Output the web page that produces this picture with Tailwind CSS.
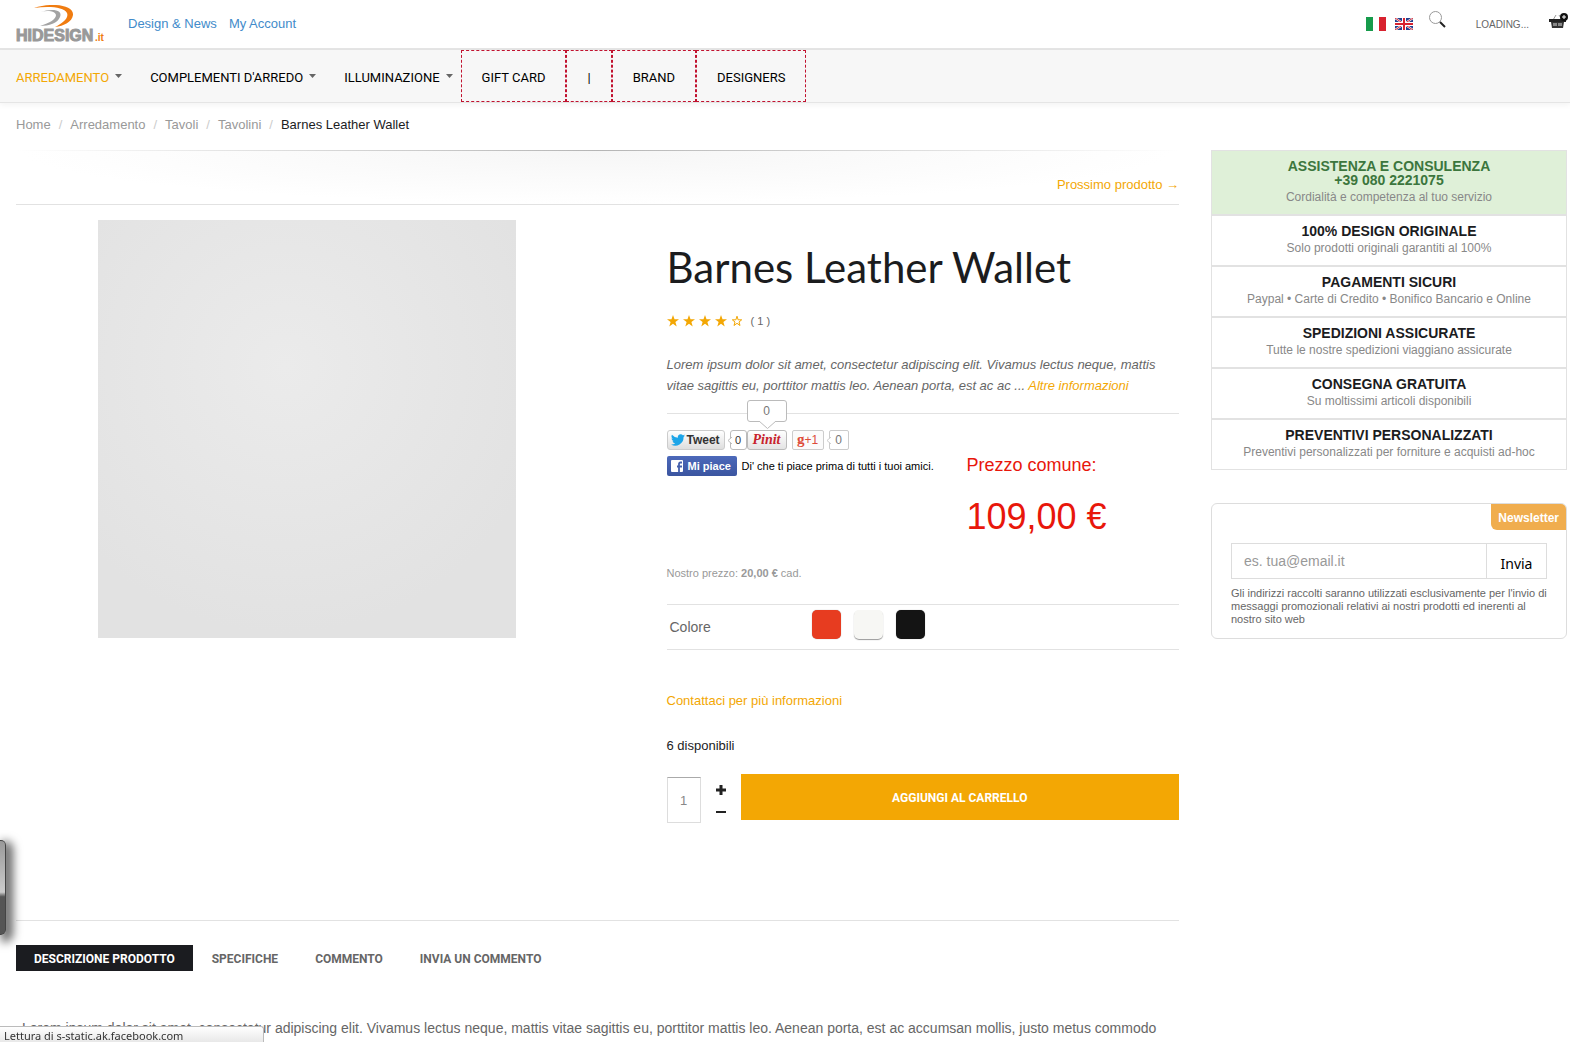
<!DOCTYPE html>
<html lang="it">
<head>
  <meta charset="UTF-8" />
  <meta name="viewport" content="width=device-width, initial-scale=1.0"/>
  <title>Barnes Leather Wallet - Hidesign.it</title>
  <script src="https://cdn.jsdelivr.net/npm/@tailwindcss/browser@4"></script>
</head>
<body class="relative min-h-screen bg-white font-['Liberation_Sans',Arial,sans-serif] text-[13px] text-[#666]">

  <!-- Top bar -->
  <header class="flex h-[50px] items-center border-b-2 border-[#e5e5e5] pl-4 pr-px">
    <a href="#" aria-label="Hidesign.it">
      <svg width="90" height="38" viewBox="0 0 90 38">
        <path d="M24 7 C37 3 47 5 44 12 C42 18 33 21 24 21 C34 18 40 14 40 10 C39 6 32 5 24 7Z" fill="#a3a3a3"/>
        <path d="M18 3 C36 -3 58 0 57 10 C56 17 48 21 39 22 C47 18 53 13 51 8 C48 2 33 1 18 3Z" fill="#f07c10"/>
        <text x="0" y="36" font-family="Liberation Sans" font-weight="bold" font-size="16" fill="#999" stroke="#999">HIDESIGN</text>
        <text x="79" y="36" font-family="Liberation Sans" font-weight="bold" font-size="10" fill="#f07c10">.it</text>
      </svg>
    </a>
    <nav class="ml-[22px] flex gap-3 text-[#428bca]">
      <a href="#">Design &amp; News</a>
      <a href="#">My Account</a>
    </nav>
    <div class="ml-auto flex items-center">
      <a href="#" aria-label="Italiano">
        <svg width="20" height="14" viewBox="0 0 20 14"><path fill="#fff" d="M0 0h20v14H0z"/><path fill="#169b4b" d="M0 0h7v14H0z"/><path fill="#d8222f" d="M13 0h7v14h-7z"/></svg>
      </a>
      <a href="#" aria-label="English" class="ml-[9px]">
        <svg width="18" height="12" viewBox="0 0 18 12">
          <path fill="#24408e" d="M0 0h18v12H0z"/>
          <path d="M0 0l18 12M18 0L0 12" stroke="#fff" stroke-width="2"/>
          <path d="M0 0l18 12M18 0L0 12" stroke="#d8222f"/>
          <path d="M9 0v12M0 6h18" stroke="#fff" stroke-width="4"/>
          <path d="M9 0v12M0 6h18" stroke="#d8222f" stroke-width="2"/>
        </svg>
      </a>
      <button type="button" aria-label="Cerca" class="mb-[10px] ml-4">
        <svg width="17" height="17" viewBox="0 0 17 17" fill="none"><circle cx="6.5" cy="6.500" r="6" stroke="#999"/><path d="M11 11l5 5" stroke="#222" stroke-width="2"/></svg>
      </button>
      <span class="ml-[30px] text-[10px]">LOADING...</span>
      <a href="#" aria-label="Carrello" class="mb-[6px] ml-5">
        <svg width="20" height="16" viewBox="0 0 20 16">
          <path d="M4 7 L7 2 M13 7 L10 2" stroke="#999" stroke-width="1" fill="none"/>
          <path d="M0 6h17v3H0z" fill="#222"/>
          <path d="M2 9h13l-1 6H3z" fill="#333"/>
          <path d="M4 10h9v3H4z" fill="#888"/>
          <path d="M8 9h1v5H8z" fill="#333"/>
          <circle cx="15" cy="4" r="4" fill="#111"/>
          <path d="M15 2v4M13 4h4" stroke="#fff"/>
        </svg>
      </a>
    </div>
  </header>

  <!-- Main menu -->
  <nav class="flex h-[53px] items-stretch border-b border-[#e5e5e5] bg-[#f7f7f7] pl-4 font-[Roboto,sans-serif] text-[13px] text-black shadow-[0_2px_6px_rgba(0,0,0,0.05)]">
    <a href="#" class="flex items-center pr-2 pt-[3px] text-[#f3a704]">ARREDAMENTO
      <svg class="mb-1 ml-[6px]" width="7" height="4" viewBox="0 0 7 4"><path d="M0 0h7L3.500 4z" fill="#666"/></svg>
    </a>
    <a href="#" class="flex items-center pl-5 pr-2 pt-[3px]">COMPLEMENTI D'ARREDO
      <svg class="mb-1 ml-[6px]" width="7" height="4" viewBox="0 0 7 4"><path d="M0 0h7L3.500 4z" fill="#666"/></svg>
    </a>
    <a href="#" class="flex items-center pl-5 pr-2 pt-[3px]">ILLUMINAZIONE
      <svg class="mb-1 ml-[6px]" width="7" height="4" viewBox="0 0 7 4"><path d="M0 0h7L3.500 4z" fill="#666"/></svg>
    </a>
    <a href="#" class="flex items-center border border-dashed border-[#c1122f] px-5 pt-[3px]">GIFT CARD</a>
    <a href="#" class="flex items-center border border-dashed border-[#c1122f] px-5 pt-[3px]">|</a>
    <a href="#" class="flex items-center border border-dashed border-[#c1122f] px-5 pt-[3px]">BRAND</a>
    <a href="#" class="flex items-center border border-dashed border-[#c1122f] px-5 pt-[3px]">DESIGNERS</a>
  </nav>

  <!-- Breadcrumb -->
  <nav class="flex h-[47px] gap-2 pl-4 pt-3 leading-5 text-[#999]">
    <a href="#">Home</a><span class="text-[#ccc]">/</span>
    <a href="#">Arredamento</a><span class="text-[#ccc]">/</span>
    <a href="#">Tavoli</a><span class="text-[#ccc]">/</span>
    <a href="#">Tavolini</a><span class="text-[#ccc]">/</span>
    <span class="text-[#1b1c1e]">Barnes Leather Wallet</span>
  </nav>

  <div class="flex gap-8 pl-4 pr-[3px]">

    <main class="min-w-0 flex-1">
      <div class="border-b border-[#e2e2e2]">
        <div class="h-px bg-linear-to-r from-transparent via-[#b5b5b5] to-transparent"></div>
        <div class="flex h-[53px] items-end justify-end bg-[radial-gradient(ellipse_at_top,#f6f6f6,#fff_70%)] pb-[9px] leading-5">
          <a href="#" class="text-[#f3a704]">Prossimo prodotto →</a>
        </div>
      </div>

      <section class="flex border-b border-[#e2e2e2] pb-[97px] pt-[15px]">
        <div class="w-1/2">
          <div class="mx-auto size-[418px] bg-[radial-gradient(circle_at_45%_35%,#ebebeb,#e2e2e2_75%)]"></div>
        </div>

        <div class="w-1/2 pl-[69px]">
          <h1 class="pt-[19px] font-[Lato,sans-serif] text-[42px] leading-14 text-[#1b1c1e]">Barnes Leather Wallet</h1>

          <div class="mt-4 flex h-5 items-center gap-1">
            <svg width="12" height="12" viewBox="0 0 12 12"><path d="M6 0l1.500 4.300H12L8.400 7l1.300 4.500L6 8.800 2.300 11.500 3.600 7 0 4.300h4.500z" fill="#f3a704"/></svg>
            <svg width="12" height="12" viewBox="0 0 12 12"><path d="M6 0l1.500 4.300H12L8.400 7l1.300 4.500L6 8.800 2.300 11.500 3.600 7 0 4.300h4.500z" fill="#f3a704"/></svg>
            <svg width="12" height="12" viewBox="0 0 12 12"><path d="M6 0l1.500 4.300H12L8.400 7l1.300 4.500L6 8.800 2.300 11.500 3.600 7 0 4.300h4.500z" fill="#f3a704"/></svg>
            <svg width="12" height="12" viewBox="0 0 12 12"><path d="M6 0l1.500 4.300H12L8.400 7l1.300 4.500L6 8.800 2.300 11.500 3.600 7 0 4.300h4.500z" fill="#f3a704"/></svg>
            <svg width="12" height="12" viewBox="0 0 12 12"><path d="M6 1.200l1.100 3.600h3.600L8 7l1 3.500-3-2.200-3 2.200L4 7 1.300 4.800h3.600z" fill="none" stroke="#f3a704"/></svg>
            <span class="pl-1 text-[11px]">( 1 )</span>
          </div>

          <p class="mt-[23px] border-b border-[#e2e2e2] pb-[17px] italic leading-[21px]">Lorem ipsum dolor sit amet, consectetur adipiscing elit. Vivamus lectus neque, mattis vitae sagittis eu, porttitor mattis leo. Aenean porta, est ac ac ... <a href="#" class="text-[#f3a704]">Altre informazioni</a></p>

          <div class="flex pt-4">
            <div class="w-[300px]">
              <div class="flex h-5 items-stretch text-[11px] text-[#333]">
                <button type="button" class="flex w-[58px] items-center gap-[2px] rounded-[3px] border border-[#ccc] bg-linear-to-b from-white to-[#dedede] pl-[3px] text-[12px] font-bold">
                  <svg width="14" height="12" viewBox="0 0 24 20"><path fill="#1da5e8" d="M24 2.400c-.9.400-1.800.7-2.800.8 1-.6 1.800-1.600 2.200-2.700-1 .6-2 1-3.100 1.200A4.900 4.900 0 0 0 11.900 6.200 14 14 0 0 1 1.700 1 4.900 4.900 0 0 0 3.200 7.600c-.8 0-1.600-.2-2.200-.6 0 2.300 1.600 4.400 3.900 4.900-.7.200-1.500.2-2.200.1.600 2 2.400 3.400 4.600 3.400A9.900 9.900 0 0 1 0 17.500 14 14 0 0 0 21.500 5c1-.7 1.800-1.600 2.500-2.600z"/></svg>Tweet
                </button>
                <span class="relative ml-[5px] flex w-[17px] items-center justify-center rounded-[3px] border border-[#bbb] bg-white">0
                  <svg class="absolute -left-[3px] top-[6px]" width="4" height="7" viewBox="0 0 4 7"><path d="M4 0L0 3.500 4 7" fill="#fff" stroke="#bbb"/></svg>
                </span>
                <span class="relative flex">
                  <button type="button" class="w-10 rounded-[3px] border border-[#bbb] bg-linear-to-b from-white to-[#e4e4e4] font-['Liberation_Serif',serif] text-[14px] leading-4 font-bold italic text-[#c8232c]">Pinit</button>
                  <span class="absolute bottom-[28px] left-0 flex h-[22px] w-10 items-center justify-center rounded-[3px] border border-[#bbb] bg-white text-[12px] text-[#777]">0
                    <svg class="absolute -bottom-[8px] left-[11px]" width="17" height="8" viewBox="0 0 17 8"><path d="M0 0l8.500 7.500L17 0" fill="#fff" stroke="#bbb"/></svg>
                  </span>
                </span>
                <button type="button" class="ml-[5px] w-8 rounded-[2px] border border-[#ccc] bg-[#fbfbfb] text-[12px] text-[#dd4b39]"><b class="font-['Liberation_Serif',serif] text-[15px] leading-3">g</b>+1</button>
                <span class="relative ml-[5px] flex w-5 items-center justify-center rounded-[2px] border border-[#ccc] bg-white text-[12px] text-[#777]">0
                  <svg class="absolute -left-[3px] top-[6px]" width="4" height="7" viewBox="0 0 4 7"><path d="M4 0L0 3.500 4 7" fill="#fff" stroke="#ccc"/></svg>
                </span>
              </div>
              <div class="mt-[6px] flex h-5 items-center gap-[5px] text-[11px] text-black">
                <button type="button" class="flex h-5 w-[70px] items-center gap-[5px] rounded-[2px] bg-linear-to-b from-[#4c69ba] to-[#3b55a0] pl-1 font-bold text-white">
                  <svg width="12" height="12" viewBox="0 0 12 12"><rect width="12" height="12" rx="1" fill="#fff"/><path d="M11 2.500H9.500C8.500 2.500 8 3 8 4v8M6 6.500h5" fill="none" stroke="#4560ad" stroke-width="1.800"/></svg>Mi piace
                </button>
                <span class="whitespace-nowrap">Di' che ti piace prima di tutti i tuoi amici.</span>
              </div>
            </div>
            <div class="pt-[23px] text-[#e8170b]">
              <p class="text-[18px] leading-6">Prezzo comune:</p>
              <p class="pt-4 text-[36px] leading-12">109,00 €</p>
            </div>
          </div>

          <p class="pt-[22px] text-[11px] leading-5 text-[#999]">Nostro prezzo: <b>20,00 €</b> cad.</p>

          <fieldset class="mt-[21px] flex h-[46px] items-center border-y border-[#e2e2e2] pl-[3px] text-[14px]">
            <span class="w-[142px]">Colore</span>
            <span class="mb-[6px] flex gap-[13px]">
              <button type="button" aria-label="Rosso" class="size-[29px] rounded-[5px] bg-[#e73c20] shadow-[0_0_1px_#999]"></button>
              <button type="button" aria-label="Bianco" class="size-[29px] rounded-[5px] bg-[#f7f7f4] shadow-[0_1px_1px_#999]"></button>
              <button type="button" aria-label="Nero" class="size-[29px] rounded-[5px] bg-[#141414] shadow-[0_0_1px_#999]"></button>
            </span>
          </fieldset>

          <p class="pt-[41px] leading-5"><a href="#" class="text-[#f3a704]">Contattaci per più informazioni</a></p>
          <p class="pt-[25px] leading-5 text-[#1b1c1e]">6 disponibili</p>

          <form class="mt-[18px] flex">
            <input type="text" value="1" aria-label="Quantità" class="mt-[3px] h-[46px] w-[34px] border border-[#ddd] border-t-[#aaa] text-center text-[#888]"/>
            <div class="flex w-10 flex-col items-center gap-2 pt-[9px]">
              <button type="button" aria-label="Aumenta" class="flex h-[14px] items-center"><svg width="10" height="10" viewBox="0 0 10 10"><path d="M5 0v10M0 5h10" stroke="#222" stroke-width="3"/></svg></button>
              <button type="button" aria-label="Diminuisci" class="flex h-[14px] items-center"><svg width="10" height="2" viewBox="0 0 10 2"><path d="M0 0h10v2H0z" fill="#222"/></svg></button>
            </div>
            <button type="button" class="h-[46px] flex-1 bg-[#f3a704] pt-[2px] font-[Roboto,sans-serif] text-[12px] font-bold text-white">AGGIUNGI AL CARRELLO</button>
          </form>
        </div>
      </section>

      <!-- Tabs -->
      <div class="flex h-[50px] items-end gap-px font-[Roboto,sans-serif] text-[12px] font-bold leading-6">
        <button type="button" class="bg-[#1b1c20] px-[18px] pt-[2px] text-white">DESCRIZIONE PRODOTTO</button>
        <button type="button" class="px-[18px] pt-[2px]">SPECIFICHE</button>
        <button type="button" class="px-[18px] pt-[2px]">COMMENTO</button>
        <button type="button" class="px-[18px] pt-[2px]">INVIA UN COMMENTO</button>
      </div>
      <p class="overflow-hidden whitespace-nowrap pl-[6px] pt-[47px] text-[14px] leading-5">Lorem ipsum dolor sit amet, consectetur adipiscing elit. Vivamus lectus neque, mattis vitae sagittis eu, porttitor mattis leo. Aenean porta, est ac accumsan mollis, justo metus commodo</p>
    </main>

    <aside class="w-[356px] shrink-0">
      <ul class="text-center text-[12px] leading-5 text-[#888]">
        <li class="border border-[#e2e2e2] bg-[#dff0d8] pb-[7px] pt-2"><h4 class="text-[14px] font-bold leading-[14px] text-[#3c763d]">ASSISTENZA E CONSULENZA<br/>+39 080 2221075</h4>Cordialità e competenza al tuo servizio</li>
        <li class="border border-[#e2e2e2] pb-[7px] pt-2"><h4 class="text-[14px] font-bold leading-[14px] text-[#1b1c1e]">100% DESIGN ORIGINALE</h4>Solo prodotti originali garantiti al 100%</li>
        <li class="border border-[#e2e2e2] pb-[7px] pt-2"><h4 class="text-[14px] font-bold leading-[14px] text-[#1b1c1e]">PAGAMENTI SICURI</h4>Paypal • Carte di Credito • Bonifico Bancario e Online</li>
        <li class="border border-[#e2e2e2] pb-[7px] pt-2"><h4 class="text-[14px] font-bold leading-[14px] text-[#1b1c1e]">SPEDIZIONI ASSICURATE</h4>Tutte le nostre spedizioni viaggiano assicurate</li>
        <li class="border border-[#e2e2e2] pb-[7px] pt-2"><h4 class="text-[14px] font-bold leading-[14px] text-[#1b1c1e]">CONSEGNA GRATUITA</h4>Su moltissimi articoli disponibili</li>
        <li class="border border-[#e2e2e2] pb-[7px] pt-2"><h4 class="text-[14px] font-bold leading-[14px] text-[#1b1c1e]">PREVENTIVI PERSONALIZZATI</h4>Preventivi personalizzati per forniture e acquisti ad-hoc</li>
      </ul>

      <form class="mt-[33px] rounded-[6px] border border-[#ddd] pb-3">
        <div class="flex justify-end">
          <label for="email" class="rounded-bl-[6px] rounded-tr-[5px] bg-[#f0ad4e] px-[7px] pt-[2px] text-[12px] font-bold leading-6 text-white">Newsletter</label>
        </div>
        <div class="mx-[19px] mt-[13px] flex h-9 border border-[#ddd]">
          <input id="email" type="email" placeholder="es. tua@email.it" class="min-w-0 flex-1 px-3 text-[14px] placeholder:text-[#999]"/>
          <button type="button" class="w-[60px] border-l border-[#ddd] pt-1 font-['Noto_Sans',sans-serif] text-[14px] text-black">Invia</button>
        </div>
        <p class="mx-[19px] mt-2 text-[11px] leading-[13px]">Gli indirizzi raccolti saranno utilizzati esclusivamente per l'invio di messaggi promozionali relativi ai nostri prodotti ed inerenti al nostro sito web</p>
      </form>
    </aside>
  </div>

  <!-- Side widget -->
  <div class="fixed bottom-[107px] left-0 h-[95px] w-[6px] rounded-r-[5px] border border-l-0 border-[#444] bg-linear-to-b from-[#999] via-[#ccc] via-55% to-[#555] to-60% shadow-[4px_4px_10px_3px_rgba(0,0,0,0.6)]"></div>

  <!-- Status text -->
  <div class="fixed bottom-0 left-0 h-[16px] w-[264px] rounded-tr-[3px] border-r border-t border-[#bbb] bg-linear-to-b from-white to-[#e8e8e8] pl-1 font-['Noto_Sans',sans-serif] text-[11px] leading-[18px] text-[#333]">Lettura di s-static.ak.facebook.com</div>
</body>
</html>
